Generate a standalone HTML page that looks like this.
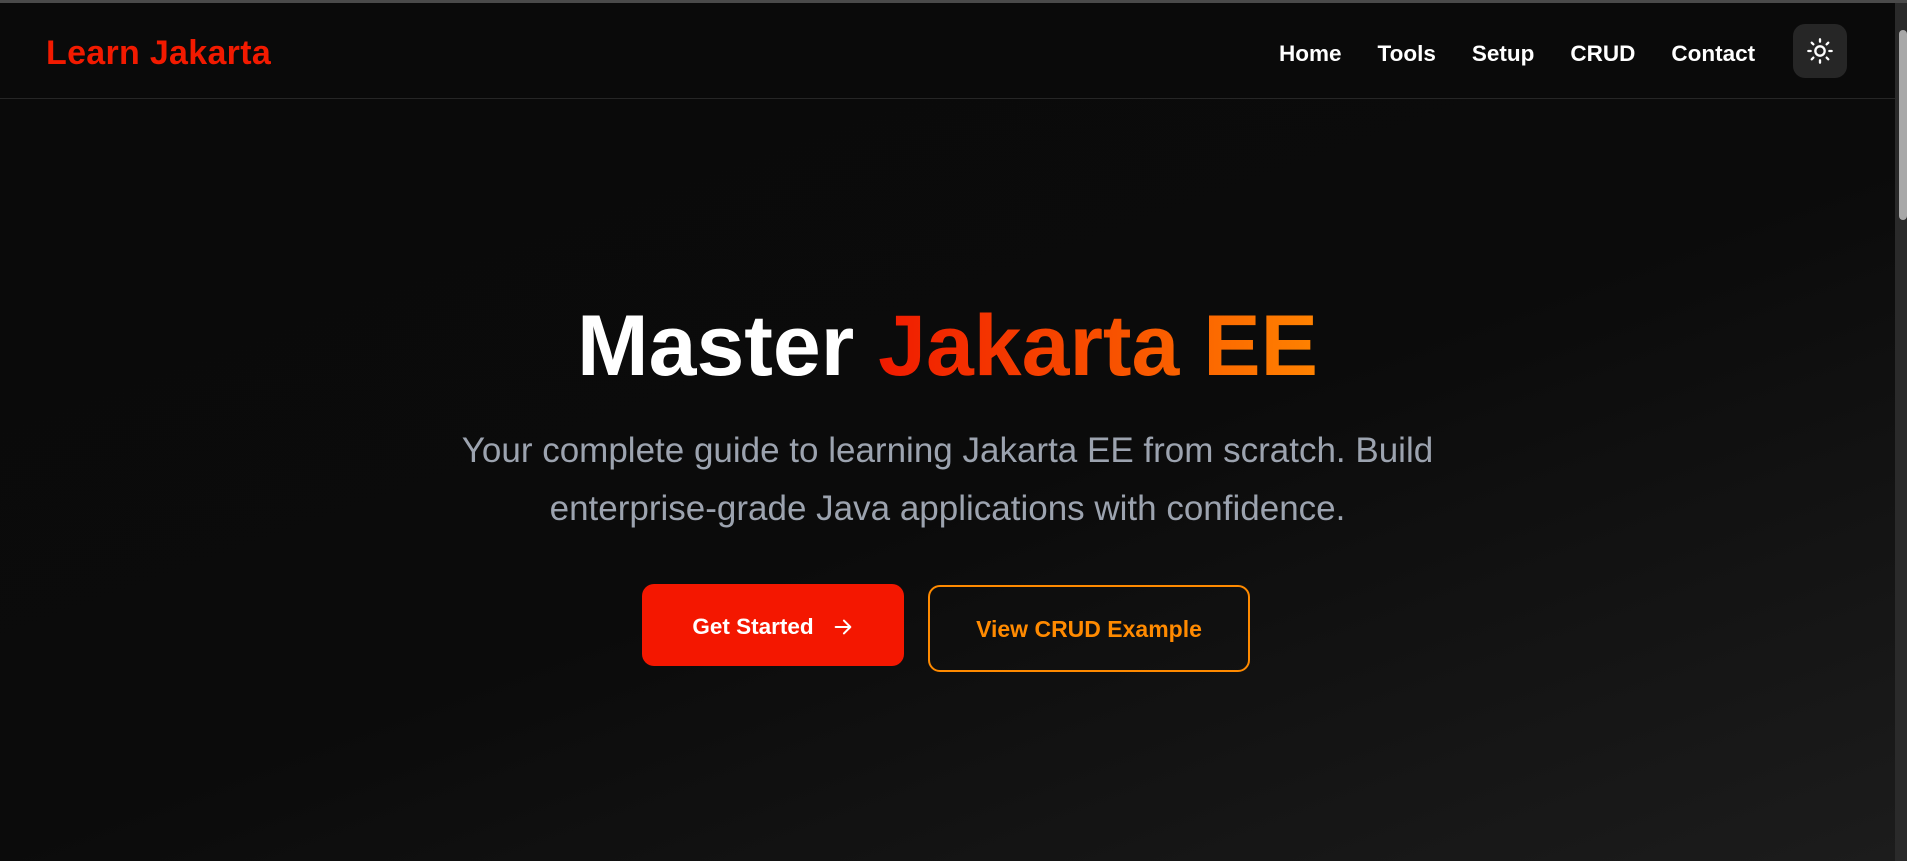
<!DOCTYPE html>
<html><head><meta charset="utf-8"><style>
*{margin:0;padding:0;box-sizing:border-box}
html,body{width:1907px;height:861px;overflow:hidden}
body{background:linear-gradient(160deg,#0a0a0a 0%,#0b0b0b 55%,#1c1c1c 100%);font-family:"Liberation Sans",sans-serif;position:relative}
.topline{position:absolute;left:0;top:0;width:1907px;height:3px;background:#4a4a4a}
.sb{position:absolute;right:0;top:3px;width:12px;height:858px;background:#2a2a2a}
.sb i{position:absolute;left:4px;top:27px;width:8px;height:190px;background:#a8a8a8;border-radius:4px}
nav{position:absolute;left:0;top:3px;width:1895px;height:96px;border-bottom:1px solid #262626;background:#0a0a0a}
.logo{position:absolute;left:46px;top:31px;font-size:34px;font-weight:bold;color:#f21a00;letter-spacing:0.3px}
.links{position:absolute;left:1279px;top:38px;display:flex;gap:36px}
.links a{color:#fff;font-size:22.5px;font-weight:bold;text-decoration:none}
.tog{position:absolute;left:1793px;top:21px;width:54px;height:54px;border-radius:12px;background:#262626;display:flex;align-items:center;justify-content:center}
h1{position:absolute;left:0;width:1895px;top:296px;text-align:center;font-size:86px;font-weight:bold;color:#fff;line-height:100px}
h1 span{background:linear-gradient(90deg,#f01a00,#ff8200);-webkit-background-clip:text;background-clip:text;color:transparent}
p{position:absolute;left:0;width:1895px;top:422px;text-align:center;font-size:35px;line-height:58px;color:#9ca3af}
.b1{position:absolute;left:642px;top:584px;width:262px;height:82px;border-radius:12px;background:#f41700;color:#fff;font-size:22.5px;font-weight:bold;display:flex;align-items:center;justify-content:center;gap:18px;padding-top:4px}
.b2{position:absolute;left:928px;top:585px;width:322px;height:87px;border-radius:12px;border:2.5px solid #ff8a00;color:#ff8a00;font-size:23px;font-weight:bold;display:flex;align-items:center;justify-content:center;padding-top:2px}
</style></head><body>
<div class="topline"></div>
<nav>
<div class="logo">Learn Jakarta</div>
<div class="links"><a>Home</a><a>Tools</a><a>Setup</a><a>CRUD</a><a>Contact</a></div>
<div class="tog"><svg width="28" height="28" viewBox="0 0 24 24" fill="none" stroke="#fff" stroke-width="2" stroke-linecap="round"><circle cx="12" cy="12" r="4"/><path d="M12 2v2M12 20v2M4.9 4.9l1.4 1.4M17.7 17.7l1.4 1.4M2 12h2M20 12h2M6.3 17.7l-1.4 1.4M19.1 4.9l-1.4 1.4"/></svg></div>
</nav>
<h1>Master <span>Jakarta EE</span></h1>
<p>Your complete guide to learning Jakarta EE from scratch. Build<br>enterprise-grade Java applications with confidence.</p>
<div class="b1">Get Started <svg width="22" height="22" viewBox="0 0 24 24" fill="none" stroke="#fff" stroke-width="2.2" stroke-linecap="round" stroke-linejoin="round"><path d="M4 12h16M13 5l7 7-7 7"/></svg></div>
<div class="b2">View CRUD Example</div>
<div class="sb"><i></i></div>
</body></html>
